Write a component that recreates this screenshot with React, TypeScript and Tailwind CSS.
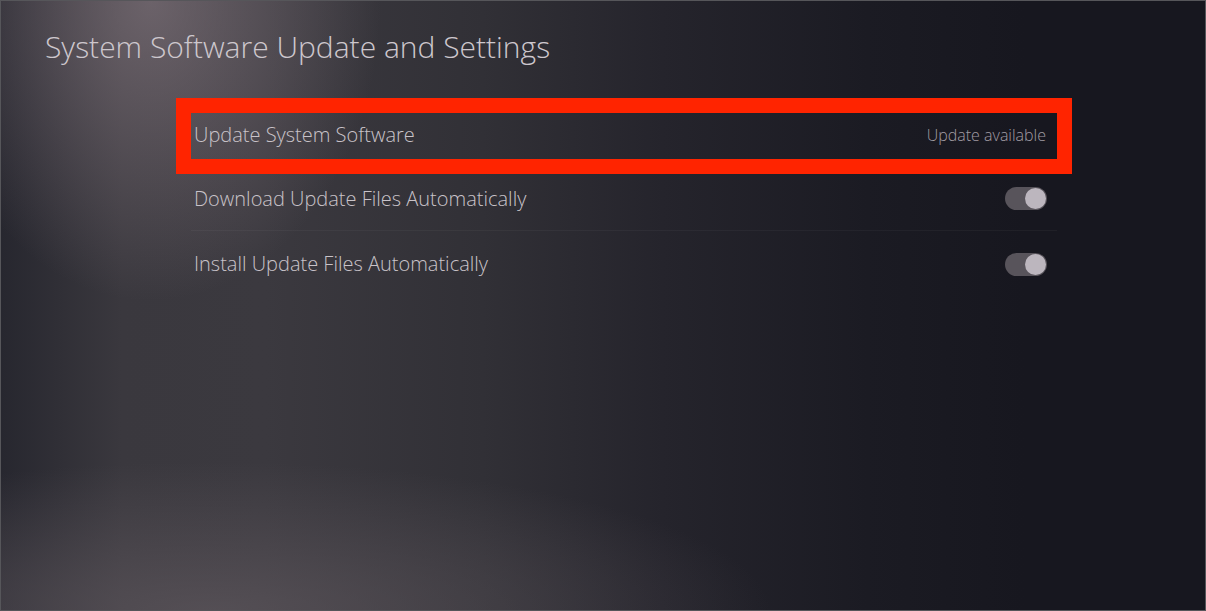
import React from "react";

function Toggle() {
  return (
    <div className="relative w-[42px] h-[23px] rounded-full bg-[#58545b]">
      <div className="absolute right-[1px] top-[1px] w-[21px] h-[21px] rounded-full bg-[#bcb6be]" />
    </div>
  );
}

export default function App() {
  return (
    <div
      className="relative w-[1206px] h-[611px] overflow-hidden border border-[#56565a] bg-[#17171f]"
      style={{ fontFamily: '"Open Sans", "Noto Sans", sans-serif' }}
    >
      <div className="absolute inset-0 bg-[linear-gradient(to_right,#27272f_0%,#3a383e_10%,#3b393f_22%,#313036_40%,#25242c_55%,#1b1b23_72%,#17171f_85%,#17171f_100%)]" />
      <div className="absolute inset-0 bg-[radial-gradient(ellipse_230px_300px_at_150px_0px,rgba(140,126,134,0.6),rgba(140,126,134,0)_100%)]" />
      <div className="absolute inset-0 bg-[radial-gradient(ellipse_560px_150px_at_210px_611px,rgba(95,88,94,0.7),rgba(95,88,94,0)_100%)]" />

      <div className="relative">
        <h1 className="pl-[44px] pt-[27px] text-[30px] leading-[38px] font-light text-[#cdc7cd]">
          System Software Update and Settings
        </h1>

        <div className="ml-[190px] w-[866px] mt-[36px]">
          <div className="h-[65px] flex items-center justify-between pl-[3px] pr-[11px]">
            <span className="text-[20px] text-[#c9c3c9] font-light">Update System Software</span>
            <span className="text-[16px] text-[#a29da4] font-light">Update available</span>
          </div>
          <div className="h-[64px] flex items-center justify-between pl-[3px] pr-[10px] border-b border-[#ffffff0a]">
            <span className="text-[20px] text-[#c9c3c9] font-light">Download Update Files Automatically</span>
            <Toggle />
          </div>
          <div className="h-[66px] flex items-center justify-between pl-[3px] pr-[10px]">
            <span className="text-[20px] text-[#c9c3c9] font-light">Install Update Files Automatically</span>
            <Toggle />
          </div>
        </div>
      </div>

      <div className="absolute left-[175px] top-[97px] w-[896px] h-[76px] border-[15px] border-[#ff2400]" />
    </div>
  );
}
